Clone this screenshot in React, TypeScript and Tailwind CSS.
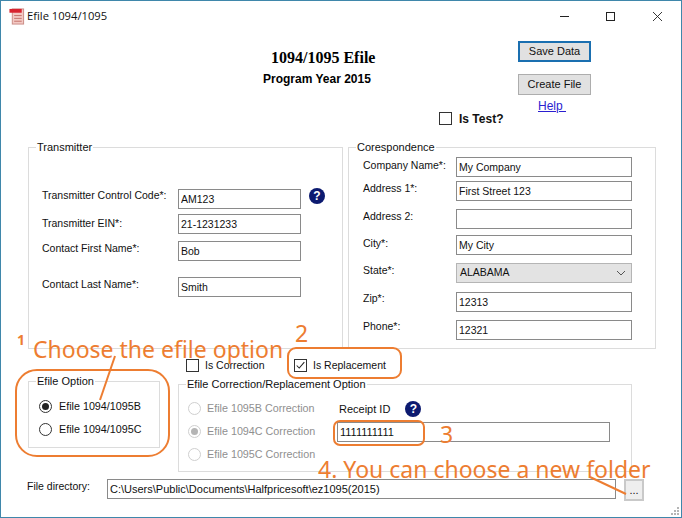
const transmitterRows = [
  { label: "Transmitter Control Code*:", value: "AM123", row: "mt-[36px]", text: "pb-[6px]" },
  { label: "Transmitter EIN*:", value: "21-1231233", row: "mt-[5px]", text: "pb-0" },
  { label: "Contact First Name*:", value: "Bob", row: "mt-[7px]", text: "pb-1" },
  { label: "Contact Last Name*:", value: "Smith", row: "mt-[16px]", text: "pb-1" },
];

const correspondenceRows = [
  { label: "Company Name*:", value: "My Company", row: "mt-[4px]", text: "pb-[2px]" },
  { label: "Address 1*:", value: "First Street 123", row: "mt-[4px]", text: "pb-1" },
  { label: "Address 2:", value: "", row: "mt-[8px]", text: "pb-1" },
  { label: "City*:", value: "My City", row: "mt-[6px]", text: "pb-[2px]" },
  { label: "State*:", value: "ALABAMA", row: "mt-[8px]", text: "pb-1", select: true },
  { label: "Zip*:", value: "12313", row: "mt-[9px]", text: "pb-[6px]" },
  { label: "Phone*:", value: "12321", row: "mt-[8px]", text: "pb-[6px]" },
];

function TextBox({ value, className }: { value: string; className: string }) {
  return (
    <input
      readOnly
      value={value}
      className={`h-5 border border-[#8a8a8a] bg-white px-[2px] text-[#111] outline-none ${className}`}
    />
  );
}

function HelpIcon() {
  return (
    <span className="flex h-4 w-4 items-center justify-center rounded-full bg-[#0c1a70] text-[12px] leading-none font-bold text-white">
      ?
    </span>
  );
}

function Radio({ label, checked, disabled }: { label: string; checked?: boolean; disabled?: boolean }) {
  return (
    <div
      className={`flex h-[23px] items-center text-[10.75px] ${disabled ? "gap-[6px] text-[#8f8f8f]" : "gap-[7px] text-[#111]"}`}
    >
      <span
        className={`flex h-[13px] w-[13px] items-center justify-center rounded-full border ${
          disabled ? "border-[#cfcfcf]" : "border-[#333]"
        }`}
      >
        {checked && <span className={`h-[7px] w-[7px] rounded-full ${disabled ? "bg-[#b5b5b5]" : "bg-[#222]"}`} />}
      </span>
      {label}
    </div>
  );
}

function CheckBox({ label, checked, className }: { label: string; checked?: boolean; className?: string }) {
  return (
    <div className={`flex h-[13px] items-center gap-[6px] ${className ?? ""}`}>
      <span className="flex h-[13px] w-[13px] items-center justify-center border border-[#333] bg-white">
        {checked && (
          <svg viewBox="0 0 13 13" className="h-[11px] w-[11px]" fill="none" stroke="#222" strokeWidth="1.2">
            <path d="M2 6.5l3 3 6-7" />
          </svg>
        )}
      </span>
      {label}
    </div>
  );
}

function GroupBox({ title, className, children }: { title: string; className: string; children: React.ReactNode }) {
  return (
    <fieldset className={`border border-[#dcdcdc] ${className}`}>
      <legend className="ml-[7px] px-[1px] text-[11px] leading-[12px] text-[#111]">{title}</legend>
      {children}
    </fieldset>
  );
}

export default function App() {
  return (
    <div className="relative flex h-[518px] w-[682px] flex-col overflow-hidden border border-[#3f87ab] bg-white font-['Liberation_Sans',sans-serif] text-[10.5px] text-[#111]">
      {/* title bar */}
      <div className="flex h-[30px] shrink-0 items-center">
        <svg viewBox="0 0 16 18" className="ml-[8px] h-[17px] w-[16px]">
          <rect x="3" y="1" width="12" height="16" fill="#f3c9c4" stroke="#c98a84" />
          <path d="M5 8h8M5 11h8M5 14h8" stroke="#c26f68" />
          <rect x="0" y="1" width="13" height="4" fill="#d8232f" />
        </svg>
        <span className="ml-[2px] w-[80px] font-['Open_Sans',sans-serif] text-[11.2px] whitespace-nowrap text-[#111]">
          Efile 1094/1095
        </span>
        <svg viewBox="0 0 9 9" className="ml-[453px] h-[9px] w-[9px]" fill="none" stroke="#222">
          <path d="M0 4.5h9" />
        </svg>
        <svg viewBox="0 0 9 9" className="ml-[37px] h-[9px] w-[9px]" fill="none" stroke="#222">
          <rect x=".5" y=".5" width="8" height="8" />
        </svg>
        <svg viewBox="0 0 9 9" className="ml-[38px] h-[9px] w-[9px]" fill="none" stroke="#222" strokeWidth=".9">
          <path d="M0 0l9 9M9 0l-9 9" />
        </svg>
      </div>

      {/* header */}
      <div className="flex h-[110px] shrink-0">
        <div className="ml-[262px] w-[176px] pt-[17px]">
          <div className="ml-[8px] font-['Liberation_Serif',serif] text-[16px] leading-[20px] font-bold text-black">
            1094/1095 Efile
          </div>
          <div className="mt-[4px] text-[12px] leading-[14px] font-bold text-black">Program Year 2015</div>
        </div>
        <div className="w-[79px] pt-[81px]">
          <CheckBox label="Is Test?" className="gap-[7px] text-[12px] font-bold" />
        </div>
        <div className="flex w-[73px] flex-col pt-[10px]">
          <button className="h-[21px] border-2 border-[#1a6fb0] bg-[#e1e1e1] text-[11px] text-[#111]">Save Data</button>
          <button className="mt-[12px] h-[21px] border border-[#adadad] bg-[#e1e1e1] text-[11px] text-[#111]">
            Create File
          </button>
          <a className="mt-[4px] ml-[20px] text-[12px] leading-[14px] text-[#2a1ed0] underline">Help&nbsp;</a>
        </div>
      </div>

      {/* transmitter + correspondence */}
      <div className="ml-[27px] flex h-[208px] shrink-0 gap-[5px]">
        <GroupBox title="Transmitter" className="h-[208px] w-[315px]">
          <div className="pl-[13px]">
            {transmitterRows.map((r) => (
              <div key={r.label} className={`flex h-5 ${r.row}`}>
                <div className={`flex w-[136px] items-center ${r.text}`}>{r.label}</div>
                <TextBox value={r.value} className="w-[123px]" />
                {r.label.includes("Control") && (
                  <span className="mt-[-1px] ml-[8px]">
                    <HelpIcon />
                  </span>
                )}
              </div>
            ))}
          </div>
        </GroupBox>
        <GroupBox title="Corespondence" className="h-[208px] w-[308px]">
          <div className="pl-[14px]">
            {correspondenceRows.map((r) => (
              <div key={r.label} className={`flex h-5 ${r.row}`}>
                <div className={`flex w-[93px] items-center ${r.text}`}>{r.label}</div>
                {r.select ? (
                  <div className="flex h-5 w-[176px] items-center justify-between border border-[#b5b5b5] bg-[#e3e3e3] pr-[5px] pl-[3px]">
                    {r.value}
                    <svg viewBox="0 0 10 6" className="h-[6px] w-[10px]" fill="none" stroke="#555">
                      <path d="M1 1l4 4 4-4" />
                    </svg>
                  </div>
                ) : (
                  <TextBox value={r.value} className="w-[176px]" />
                )}
              </div>
            ))}
          </div>
        </GroupBox>
      </div>

      {/* options */}
      <div className="ml-[27px] flex h-[123px] shrink-0 gap-[18px]">
        <div className="pt-[26px]">
          <GroupBox title="Efile Option" className="h-[73px] w-[132px]">
            <div className="mt-[8px] pl-[10px]">
              <Radio label="Efile 1094/1095B" checked />
              <Radio label="Efile 1094/1095C" />
            </div>
          </GroupBox>
        </div>
        <div className="pt-[10px]">
          <div className="flex">
            <CheckBox label="Is Correction" className="ml-[8px] w-[108px]" />
            <CheckBox label="Is Replacement" checked />
          </div>
          <GroupBox title="Efile Correction/Replacement Option" className="mt-[6px] h-[94px] w-[454px]">
            <div className="flex pl-[9px]">
              <div className="mt-[7px] w-[149px]">
                <Radio label="Efile 1095B Correction" disabled />
                <Radio label="Efile 1094C Correction" checked disabled />
                <Radio label="Efile 1095C Correction" disabled />
              </div>
              <div className="mt-[12px]">
                <div className="ml-[2px] flex h-[14px] items-center gap-[15px] text-[11px]">
                  Receipt ID
                  <HelpIcon />
                </div>
                <TextBox value="1111111111" className="mt-[6px] w-[273px] text-[11px]" />
              </div>
            </div>
          </GroupBox>
        </div>
      </div>

      {/* file directory */}
      <div className="mt-[7px] ml-[26px] flex items-start">
        <div className="w-[80px] leading-[14px]">File directory:</div>
        <TextBox value="C:\Users\Public\Documents\Halfpricesoft\ez1095(2015)" className="w-[509px] text-[11px]" />
        <button className="ml-[8px] h-[22px] w-[20px] border-2 border-[#c9c9c9] bg-[#eeeeee] text-[11px] leading-none">
          ...
        </button>
      </div>

      {/* resize grip */}
      <svg viewBox="0 0 10 10" className="absolute right-[1px] bottom-[1px] h-[10px] w-[10px]" fill="#b5b5b5">
        <rect x="7" y="1" width="2" height="2" />
        <rect x="4" y="4" width="2" height="2" />
        <rect x="7" y="4" width="2" height="2" />
        <rect x="1" y="7" width="2" height="2" />
        <rect x="4" y="7" width="2" height="2" />
        <rect x="7" y="7" width="2" height="2" />
      </svg>

      {/* orange annotations drawn over the form */}
      <div className="absolute top-[368px] left-[14px] h-[88px] w-[155px] rounded-[22px] border-2 border-[#ed7d31]" />
      <div className="absolute top-[346px] left-[286px] h-[32px] w-[115px] rounded-[9px] border-2 border-[#ed7d31]" />
      <div className="absolute top-[419px] left-[332px] h-[26px] w-[92px] rounded-[7px] border-2 border-[#ed7d31]" />
      <svg viewBox="0 0 682 518" className="absolute top-[-1px] left-[-1px] h-[518px] w-[682px]" fill="none" stroke="#ed7d31" strokeWidth="2">
        <path d="M115 356L100 400" />
        <path d="M590 477L626 494" />
      </svg>
      <span className="absolute top-[331px] left-[16px] font-['Noto_Sans',sans-serif] text-[14px] leading-[16px] font-bold text-[#ed7d31]">
        1
      </span>
      <span className="absolute top-[336px] left-[32px] font-['Noto_Sans',sans-serif] text-[23px] leading-[24px] whitespace-nowrap text-[#ed7d31]">
        Choose the efile option
      </span>
      <span className="absolute top-[320px] left-[294px] font-['Noto_Sans',sans-serif] text-[23px] leading-[24px] text-[#ed7d31]">
        2
      </span>
      <span className="absolute top-[421px] left-[439px] font-['Noto_Sans',sans-serif] text-[23px] leading-[24px] text-[#ed7d31]">
        3
      </span>
      <span className="absolute top-[456px] left-[317px] font-['Noto_Sans',sans-serif] text-[23px] leading-[24px] whitespace-nowrap text-[#ed7d31]">
        4. You can choose a new folder
      </span>
    </div>
  );
}
